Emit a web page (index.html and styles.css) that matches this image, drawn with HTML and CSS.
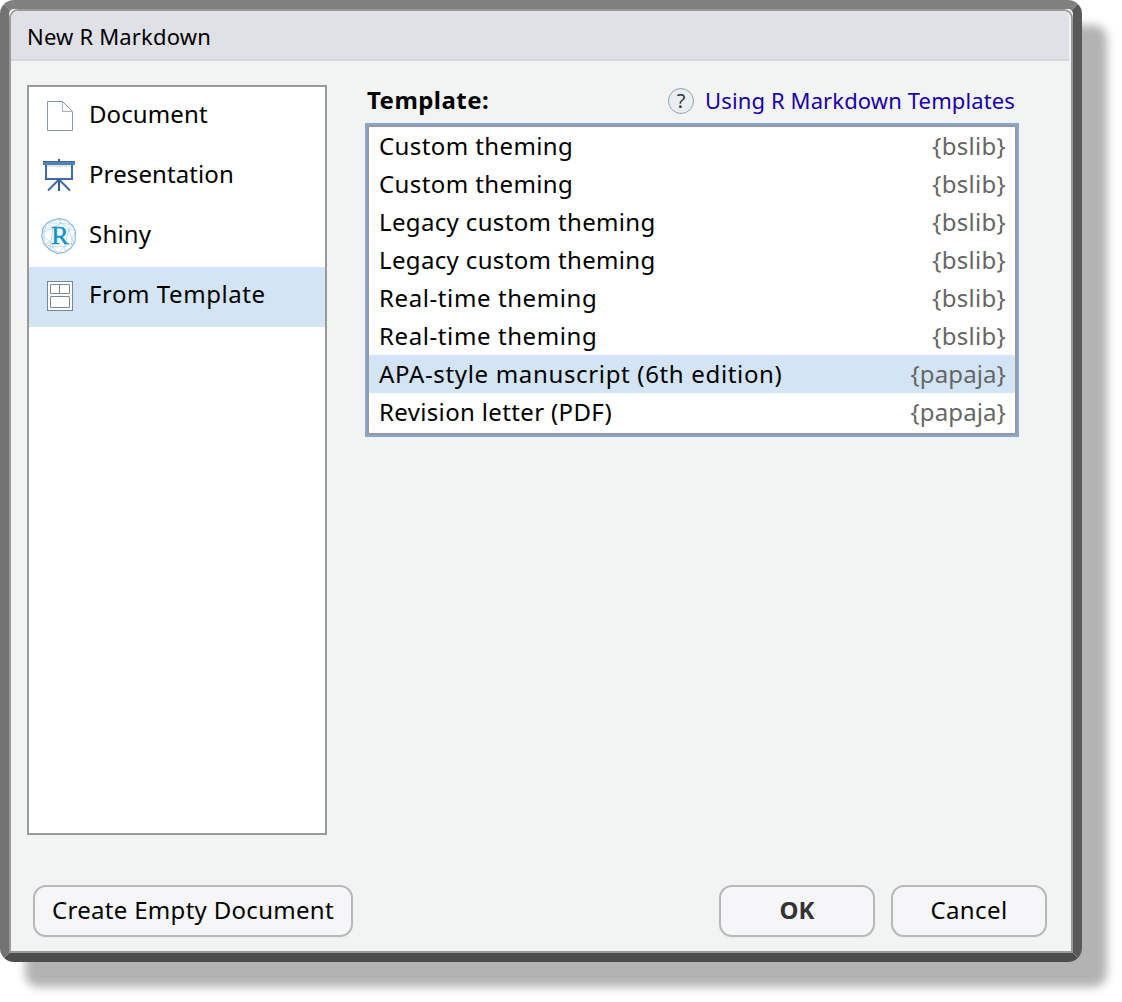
FILE: index.html
```html
<!DOCTYPE html>
<html lang="en">
<head>
<meta charset="utf-8">
<title>New R Markdown</title>
<link rel="stylesheet" href="styles.css">
</head>
<body>
<div class="frame">
<main class="dialog">
  <header class="titlebar"><span class="t-title">New R Markdown</span></header>
  <div class="content">
    <nav class="kinds">
      <div class="kind">
        <svg class="icon" width="36" height="36" viewBox="0 0 36 36" fill="none"><path d="M6.5 3.5H21.5L31.5 13.5V32.5H6.5Z" fill="#fff" stroke="#8798a8"/><path d="M21.5 4V13.5H31" stroke="#a4b2be"/></svg>
        <span class="t-document">Document</span>
      </div>
      <div class="kind">
        <svg class="icon" width="36" height="36" viewBox="0 0 36 36"><path d="M17 1h2v4h-2zM17 22h2v11h-2z" fill="#365e8d"/><rect x="5" y="6" width="26" height="15" fill="#fff" stroke="#3e6a9c" stroke-width="2"/><path d="M6 7h24v2H6z" fill="#e4e4e4"/><path d="M2 3h32v4H2z" fill="#4f82b6"/><path d="M2 3h32v1H2z" fill="#3c6a9c"/><path d="M17.500 22L7 32.500M18.500 22L29 32.500" stroke="#3e6a9c" stroke-width="2"/></svg>
        <span class="t-presentation">Presentation</span>
      </div>
      <div class="kind">
        <svg class="icon" width="36" height="36" viewBox="0 0 36 36"><g fill="none" stroke="#a9cdea" stroke-width=".7"><path d="M12 2L18 .5L25 2L31 7L34.500 13L34 24L30 30L24 34L17 35.500L9 32L3 26L.7 18L2 10L6 5Z" stroke="#83b4dc" stroke-width="1.100"/><path d="M12 2L25 2L31 7L20 5L6 5L18 .5L20 5L12 10L6 5L3 14L2 10L12 10L3 14L.7 18L10 24L3 26L3 14M20 5L28 11L34.500 13L31 22L28 11L31 7M31 22L34 24L24 28L24 34L30 30L31 22M24 28L17 35.500L12 29L9 32L10 24L12 29L24 28M12 29L3 26M12 10L20 5M12 10L10 24M28 11L24 28"/></g><text class="r-mark" x="19" y="26" text-anchor="middle">R</text></svg>
        <span class="t-shiny">Shiny</span>
      </div>
      <div class="kind selected">
        <svg class="icon" width="36" height="36" viewBox="0 0 36 36" fill="none" stroke="#778999"><rect x="6.500" y="3.500" width="25" height="29" fill="#fff"/><rect x="9.500" y="6.500" width="19" height="9" rx=".5"/><path d="M18.500 6.500V15.500"/><rect x="9.500" y="18.500" width="19" height="11" rx=".5"/></svg>
        <span class="t-from">From Template</span>
      </div>
    </nav>
    <section class="templates">
      <div class="heading">
        <strong class="t-template">Template:</strong>
        <a class="help"><span class="help-mark">?</span><span class="t-help">Using R Markdown Templates</span></a>
      </div>
      <div class="list">
        <div class="row"><span class="t-custom">Custom theming</span><span class="pkg">{bslib}</span></div>
        <div class="row"><span class="t-custom">Custom theming</span><span class="pkg">{bslib}</span></div>
        <div class="row"><span class="t-legacy">Legacy custom theming</span><span class="pkg">{bslib}</span></div>
        <div class="row"><span class="t-legacy">Legacy custom theming</span><span class="pkg">{bslib}</span></div>
        <div class="row"><span class="t-real">Real-time theming</span><span class="pkg">{bslib}</span></div>
        <div class="row"><span class="t-real">Real-time theming</span><span class="pkg">{bslib}</span></div>
        <div class="row selected"><span class="t-apa">APA-style manuscript (6th edition)</span><span class="pkg papaja">{papaja}</span></div>
        <div class="row"><span class="t-revision">Revision letter (PDF)</span><span class="pkg papaja">{papaja}</span></div>
      </div>
    </section>
  </div>
  <footer class="actions">
    <button class="button empty"><span class="t-empty">Create Empty Document</span></button>
    <button class="button ok"><span class="t-ok">OK</span></button>
    <button class="button"><span class="t-cancel">Cancel</span></button>
  </footer>
</main>
</div>
</body>
</html>
```
FILE: styles.css
```css
* { box-sizing: border-box; }
body { margin: 0; height: 1002px; background: #fff; overflow: hidden; font-family: "Noto Sans", sans-serif; font-size: 24px; color: #000; white-space: nowrap; }
.frame { width: 1082px; height: 962px; border: 9px solid; border-color: #808080 #595959 #4d4d4d #737373; border-radius: 14px; background: #fff; box-shadow: 25px 25px 10px #b3b3b3; }
.dialog { display: flex; flex-direction: column; width: 1064px; height: 944px; border: 2px solid #999; border-radius: 9px 9px 0 0; background: #f2f4f4; }
.titlebar { height: 50px; margin-right: 2px; padding-left: 16px; border-bottom: 2px solid #d1d9dd; border-radius: 7px 7px 0 0; background: #e0e1e6; font-size: 22px; line-height: 50px; }
.content { display: flex; gap: 38px; padding: 24px 0 0 16px; }
.kinds { width: 300px; height: 750px; border: 2px solid #999; background: #fff; }
.kind { display: flex; align-items: flex-start; gap: 12px; height: 60px; padding: 0 0 0 12px; line-height: 54px; }
.icon { flex: none; margin-top: 11px; }
.selected { background: #d3e4f4; }
.r-mark { font: 26px "Liberation Serif", serif; fill: #0a94d0; stroke: #0a94d0; stroke-width: .5; }
.templates { width: 654px; }
.heading { display: flex; justify-content: space-between; height: 38px; padding: 0 4px 0 2px; line-height: 29px; }
.help { display: flex; gap: 11px; color: #1a00a8; font-size: 22px; line-height: 31px; }
.help-mark { width: 26px; height: 26px; margin-top: 3px; border: 1px solid #8ba5b2; border-radius: 50%; background: #e9eef1; color: #263744; font-size: 20px; line-height: 23px; text-align: center; }
.list { height: 314px; border: 2px solid #82a7e0; outline: 2px solid #999; outline-offset: -4px; background: #fff; padding: 2px; }
.row { display: flex; justify-content: space-between; height: 38px; padding: 0 9px 0 10px; line-height: 38px; }
.pkg { color: #666; letter-spacing: .3px; }
.papaja { letter-spacing: .15px; }
.actions { display: flex; gap: 16px; padding: 50px 24px 0 22px; }
.button { width: 156px; height: 52px; padding: 0; border: 2px solid #b8b8b8; border-radius: 13px; background: #f6f6f9; color: #000; font: inherit; line-height: 46px; box-shadow: 0 1px 1px #e7e8e9; }
.button span { display: block; height: 48px; }
.empty { width: 320px; margin-right: auto; }
.ok { color: #333; font-weight: 700; }

/* Tracking per label */
.t-title { letter-spacing: .18px; }
.t-document, .t-presentation { letter-spacing: .1px; }
.t-shiny { letter-spacing: .2px; }
.t-from { letter-spacing: .55px; }
.t-template { letter-spacing: .45px; }
.t-help { letter-spacing: .12px; }
.t-custom { letter-spacing: .4px; }
.t-legacy, .t-revision { letter-spacing: .35px; }
.t-real { letter-spacing: .6px; }
.t-apa { letter-spacing: .66px; }
.t-empty { letter-spacing: .3px; }
.t-cancel { letter-spacing: .4px; }
```
